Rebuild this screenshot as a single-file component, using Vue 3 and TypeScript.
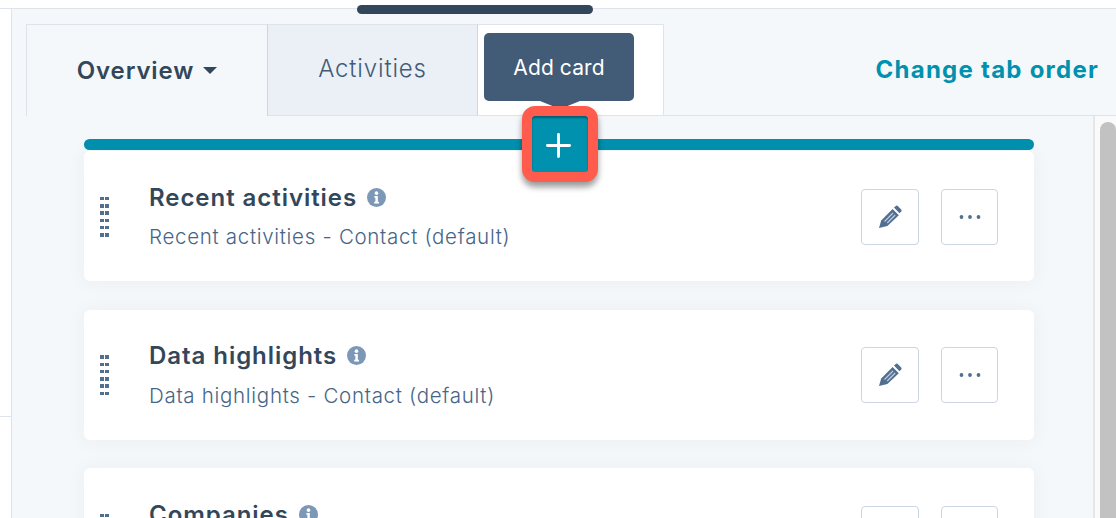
<script setup lang="ts">
interface CardItem {
  title: string
  subtitle: string
}

const cards: CardItem[] = [
  { title: 'Recent activities', subtitle: 'Recent activities - Contact (default)' },
  { title: 'Data highlights', subtitle: 'Data highlights - Contact (default)' },
  { title: 'Companies', subtitle: 'Companies - Contact (default)' },
]
const handleDots = Array.from({ length: 12 }, (_, i) => i)
</script>

<template>
  <div class="page">
    <div class="top-strip"></div>
    <div class="top-pill"></div>
    <div class="body">
      <div class="rail"><div class="rail-block"></div></div>
      <main class="main">
        <div class="tab-row">
          <div class="tab tab-active">
            <span>Overview</span>
            <svg class="caret" viewBox="0 0 14 7" width="14" height="7"><path d="M0 0h14L7 7z" fill="#33475b" /></svg>
          </div>
          <div class="tab tab-second"><span>Activities</span></div>
          <div class="tab tab-third"></div>
          <a class="change-order">Change tab order</a>
        </div>
        <div class="content-row">
          <div class="content">
            <div class="teal-bar"></div>
            <section v-for="card in cards" :key="card.title" class="card">
              <div class="handle">
                <i v-for="d in handleDots" :key="d"></i>
              </div>
              <div class="card-text">
                <div class="card-title">
                  <span>{{ card.title }}</span>
                  <svg class="info" viewBox="0 0 20 20" width="19" height="19">
                    <circle cx="10" cy="10" r="10" fill="#7c98b6" />
                    <circle cx="10" cy="5.4" r="1.9" fill="#fff" />
                    <path d="M7.8 8.5h3.6v6h1.2v1.8H7.6v-1.8h1.2v-4.2h-1z" fill="#fff" />
                  </svg>
                </div>
                <div class="card-sub">{{ card.subtitle }}</div>
              </div>
              <div class="actions">
                <button class="icon-btn btn-edit">
                  <svg viewBox="0 0 24 24" width="24" height="24">
                    <path d="M1 23l2.2-7.6L14.6 4l6.2 6.200L9.4 21z" fill="#516f90" />
                    <path d="M16 2.600l1.500-1.400a1.800 1.800 0 0 1 2.500 0l3 3a1.800 1.800 0 0 1 0 2.500l-1.500 1.500z" fill="#516f90" />
                    <path d="M6.500 16.500l8.500-8.500M9.200 18l8-8" stroke="#c3d0de" stroke-width="1.100" fill="none" />
                  </svg>
                </button>
                <button class="icon-btn">
                  <svg viewBox="0 0 24 6" width="24" height="6">
                    <circle cx="3.500" cy="3" r="1.900" fill="#516f90" />
                    <circle cx="12" cy="3" r="1.900" fill="#516f90" />
                    <circle cx="20.500" cy="3" r="1.900" fill="#516f90" />
                  </svg>
                </button>
              </div>
            </section>
          </div>
          <div class="scroll-track"><div class="scroll-thumb"></div></div>
        </div>
      </main>
    </div>

    <div class="tooltip">Add card<span class="tooltip-arrow"></span></div>
    <button class="add-btn">
      <svg viewBox="0 0 26 26" width="25" height="25">
        <path d="M13 1.500v23M1.500 13h23" stroke="#fff" stroke-width="3" stroke-linecap="round" />
      </svg>
    </button>
  </div>
</template>

<style>
html, body { margin: 0; padding: 0; background: #fff; }
</style>

<style scoped>
.page {
  position: relative;
  width: 1116px;
  height: 518px;
  overflow: hidden;
  background: #fff;
  font-family: Inter, Lato, sans-serif;
  color: #33475b;
}
.top-strip {
  height: 8px;
  border-bottom: 1px solid #dfe3eb;
}
.top-pill {
  position: absolute;
  left: 357px;
  top: 5px;
  width: 236px;
  height: 9px;
  border-radius: 5px;
  background: #33475b;
}
.body { display: flex; height: 509px; }
.rail {
  width: 11px;
  flex: none;
  border-right: 1px solid #dfe3eb;
}
.rail-block { height: 407px; border-bottom: 1px solid #dfe3eb; }
.main {
  flex: 1;
  min-width: 0;
  background: #f5f8fa;
  display: flex;
  flex-direction: column;
}
.tab-row {
  display: flex;
  align-items: stretch;
  height: 92px;
  margin-top: 15px;
  padding-left: 14px;
  flex: none;
}
.tab {
  box-sizing: border-box;
  display: flex;
  align-items: center;
  justify-content: center;
  border-top: 1px solid #dfe3eb;
  font-size: 24px;
}
.tab-active {
  width: 242px;
  gap: 9px;
  border-left: 1px solid #dfe3eb;
  border-right: 1px solid #cbd6e2;
  font-weight: 600;
  letter-spacing: 0.85px;
}
.tab-second {
  width: 210px;
  background: #eaf0f6;
  border-right: 1px solid #cbd6e2;
  border-bottom: 1px solid #dfe3eb;
  padding-bottom: 3px;
  color: #425b76;
  font-weight: 300;
  letter-spacing: 0.85px;
}
.tab-third {
  width: 186px;
  background: #fff;
  border-right: 1px solid #dfe3eb;
  border-bottom: 1px solid #dfe3eb;
}
.change-order {
  flex: 1;
  display: flex;
  align-items: center;
  justify-content: flex-end;
  padding: 0 17px 1px 0;
  border-bottom: 1px solid #dfe3eb;
  color: #0091ae;
  font-size: 24px;
  font-weight: 700;
  letter-spacing: 1.25px;
}
.content-row { flex: 1; display: flex; min-height: 0; }
.content {
  flex: 1;
  min-width: 0;
  padding: 23px 59px 0 72px;
  display: flex;
  flex-direction: column;
  gap: 28.500px;
}
.teal-bar {
  height: 11px;
  border-radius: 6px;
  background: #0091ae;
  margin-bottom: -27.500px;
  flex: none;
}
.card {
  flex: none;
  box-sizing: border-box;
  height: 130px;
  display: flex;
  background: #fff;
  border-radius: 6px;
  box-shadow: 0 1px 20px rgba(45, 62, 80, 0.05);
  padding: 37.800px 36px 0 16px;
}
.handle {
  width: 9px;
  display: grid;
  grid-template-columns: 4px 4px;
  grid-auto-rows: 3.500px;
  gap: 3.800px 1px;
  margin-top: 8px;
  height: 40px;
  flex: none;
}
.handle i { background: #516f90; display: block; }
.card-text { margin-left: 40px; flex: 1; min-width: 0; margin-top: -5.600px; }
.card-title {
  display: flex;
  align-items: center;
  gap: 10px;
  height: 28px;
  font-size: 24px;
  font-weight: 600;
  letter-spacing: 0.95px;
}
.info { flex: none; }
.card-sub {
  margin-top: 13px;
  font-size: 20.500px;
  font-weight: 300;
  color: #466587;
  line-height: 26px;
  letter-spacing: 0.7px;
}
.actions { display: flex; gap: 22px; flex: none; }
.icon-btn {
  width: 58px;
  height: 56px;
  padding: 0;
  display: flex;
  align-items: center;
  justify-content: center;
  background: #fff;
  border: 1px solid #cbd6e2;
  border-radius: 4px;
}
.icon-btn + .icon-btn { width: 57px; }
.scroll-track {
  width: 23px;
  flex: none;
  box-sizing: border-box;
  background: #fafafa;
  border-left: 2px solid #e6e6e6;
  padding: 6px 0 0 5px;
}
.scroll-thumb {
  height: 100%;
  background: #c2c2c2;
  border-radius: 8px 8px 0 0;
}
.tooltip {
  position: absolute;
  left: 484px;
  top: 33px;
  width: 150px;
  height: 68px;
  display: flex;
  align-items: center;
  justify-content: center;
  background: #425b76;
  border-radius: 5px;
  color: #fff;
  font-size: 21px;
  font-weight: 400;
  letter-spacing: 0.1px;
}
.tooltip-arrow {
  position: absolute;
  left: 56px;
  bottom: -8px;
  width: 0;
  height: 0;
  border-left: 20px solid transparent;
  border-right: 20px solid transparent;
  border-top: 8px solid #425b76;
}
.add-btn {
  position: absolute;
  left: 522px;
  top: 106px;
  box-sizing: border-box;
  width: 76px;
  height: 76px;
  padding: 3px 3px 0 0;
  display: flex;
  align-items: center;
  justify-content: center;
  background: #0091ae;
  border: 10px solid #ff5c4d;
  border-radius: 13px;
  box-shadow: 0 5px 6px rgba(0, 0, 0, 0.4), inset 0 2px 2px rgba(0, 0, 0, 0.35);
}
</style>
